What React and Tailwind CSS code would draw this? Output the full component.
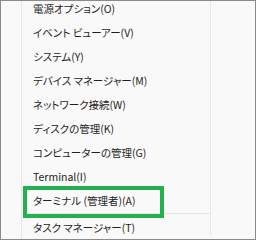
export default function App() {
  const items = [
    "電源オプション(O)",
    "イベント ビューアー(V)",
    "システム(Y)",
    "デバイス マネージャー(M)",
    "ネットワーク接続(W)",
    "ディスクの管理(K)",
    "コンピューターの管理(G)",
    "Terminal(I)",
    "ターミナル (管理者)(A)",
  ];
  return (
    <div
      className="relative w-[256px] h-[240px] overflow-hidden border border-[#8a8a8a] bg-[#f9f9f9] text-[#1f1f1f] text-[10.5px] flex [font-feature-settings:'palt']"
      style={{ fontFamily: "'Noto Sans CJK JP', 'Noto Sans', sans-serif" }}
    >
      <div className="w-[21px] h-full border-r border-[#e6e6e6]" />
      <div className="w-[189px] h-full border-r border-[#e6e6e6] flex flex-col -mt-[4px]">
        {items.map((t) => (
          <div key={t} className="h-[24px] flex items-center pl-[11px] shrink-0">
            {t}
          </div>
        ))}
        <div className="h-px bg-[#e6e6e6] shrink-0" />
        <div className="h-[28px] flex items-center pl-[11px] shrink-0">タスク マネージャー(T)</div>
      </div>
      <div className="flex-1" />
      <div className="absolute left-[22px] top-[185px] w-[141px] h-[32px] border-4 border-[#22b14c]" />
    </div>
  );
}
